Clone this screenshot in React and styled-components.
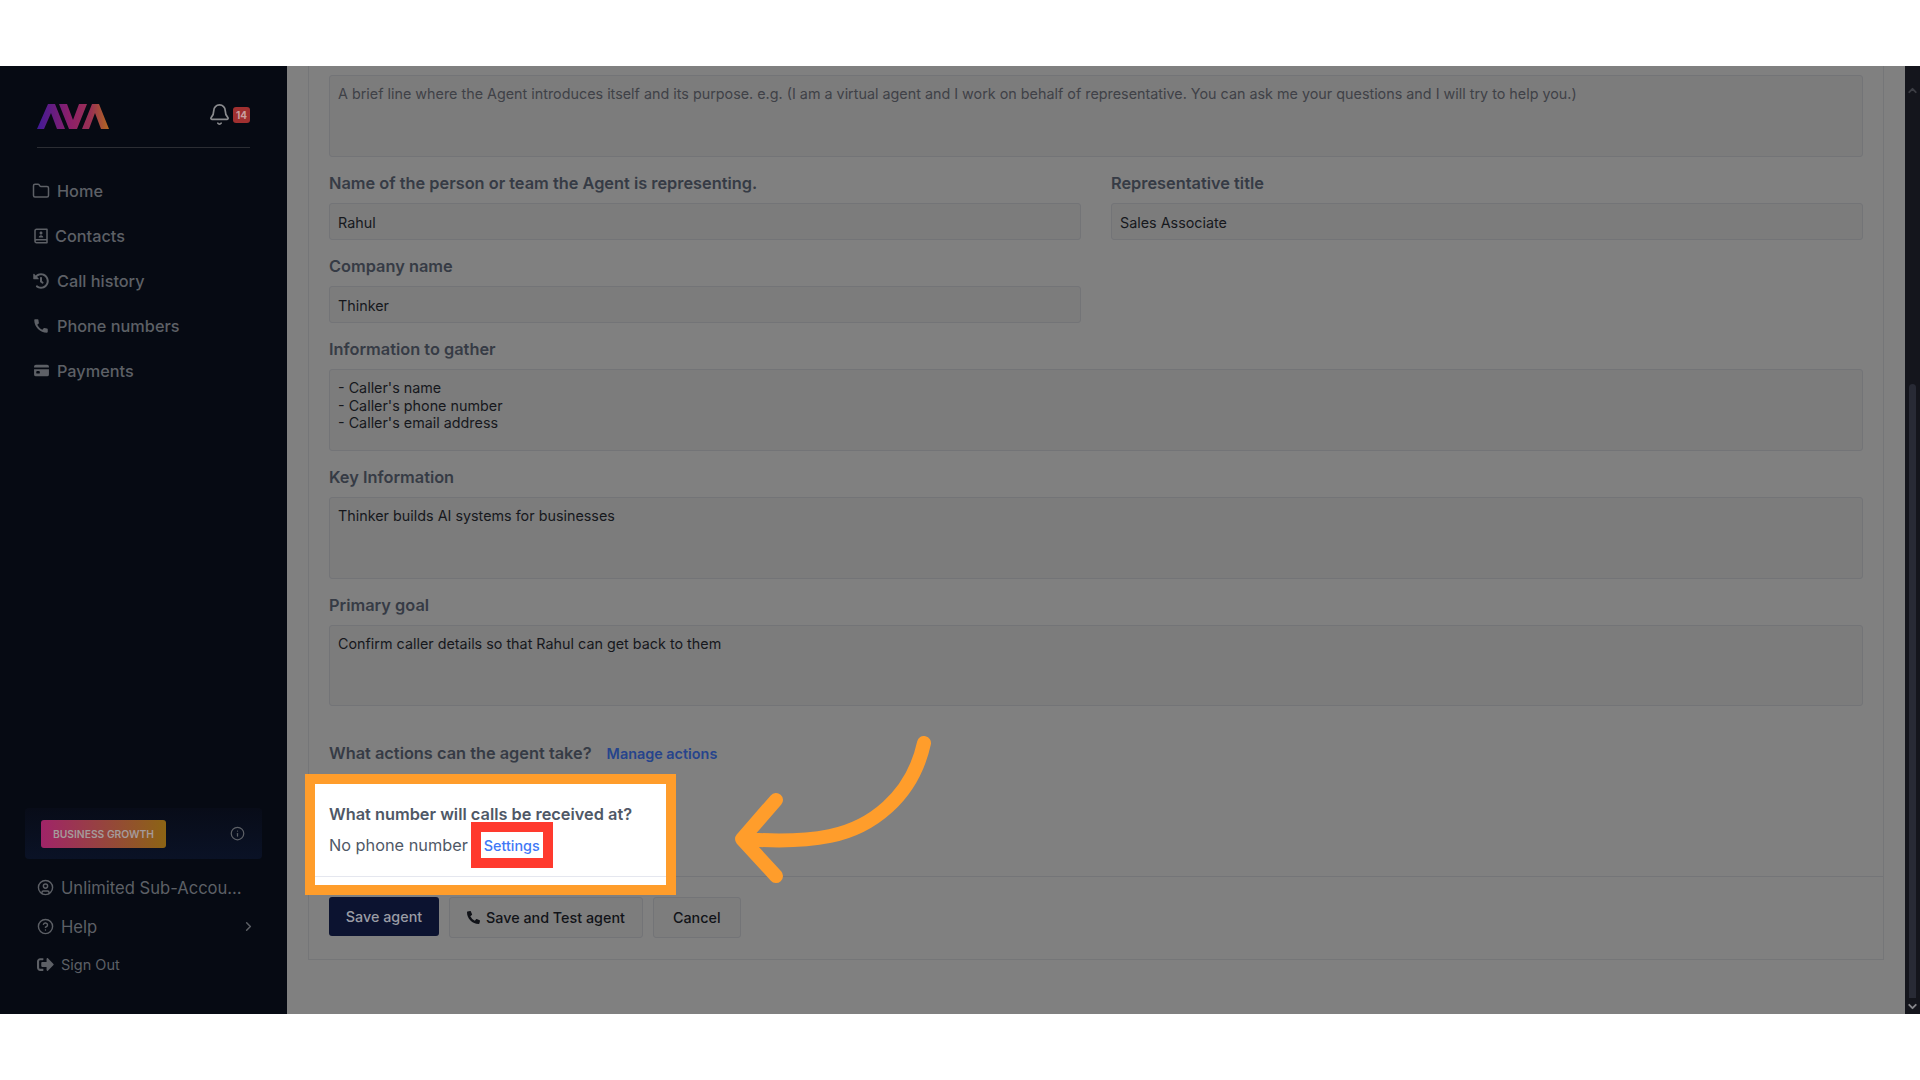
import styled, { createGlobalStyle } from 'styled-components'
import { Bell, ChevronDown, ChevronRight, ChevronUp, CircleHelp, CircleUser, Folder, Info } from 'lucide-react'
import { FaHistory, FaPhoneAlt, FaSignOutAlt } from 'react-icons/fa'
import { IoCard } from 'react-icons/io5'
import { MdCall } from 'react-icons/md'
import { RiContactsBook2Line } from 'react-icons/ri'

const navItems = [
  { label: 'Home', icon: <Folder size={18} /> },
  { label: 'Contacts', icon: <RiContactsBook2Line size={18} style={{ marginRight: -2 }} /> },
  { label: 'Call history', icon: <FaHistory size={16} style={{ marginLeft: 1, marginRight: 1 }} /> },
  { label: 'Phone numbers', icon: <MdCall size={18} /> },
  { label: 'Payments', icon: <IoCard size={17} style={{ marginLeft: 1 }} /> },
]

const Logo = () => (
  <svg width="72" height="27" viewBox="0 0 72 27">
    <defs>
      <linearGradient id="ava" x1="0" y1="0" x2="1" y2="0">
        <stop offset="0" stopColor="#401a96" />
        <stop offset="0.45" stopColor="#8c1f6a" />
        <stop offset="0.75" stopColor="#9a3152" />
        <stop offset="1" stopColor="#b0691f" />
      </linearGradient>
    </defs>
    <path
      fill="url(#ava)"
      d="M0 26 L11 1 H18 L28 26 H20 L14 10 L7 26 Z M22 1 H30 L36 17 L42 1 H50 L40 26 H32 Z M45 26 L55 1 H62 L72 26 H64 L58 10 L52 26 Z"
    />
  </svg>
)

const App = () => {
  return (
    <>
      <GlobalStyle />
      <Frame>
        <Sidebar>
          <Brand>
            <Logo />
            <Alerts>
              <Bell size={23} strokeWidth={1.8} />
              <AlertCount>14</AlertCount>
            </Alerts>
          </Brand>
          <Nav>
            {navItems.map((item) => (
              <NavItem key={item.label}>
                {item.icon}
                {item.label}
              </NavItem>
            ))}
          </Nav>
          <SideFooter>
            <PlanCard>
              <PlanBadge>BUSINESS GROWTH</PlanBadge>
              <Info size={15} />
            </PlanCard>
            <FooterLink $height={39}>
              <CircleUser size={17} />
              Unlimited Sub-Accou…
            </FooterLink>
            <FooterLink $height={39}>
              <CircleHelp size={17} />
              Help
              <ChevronRight size={15} strokeWidth={2.4} />
            </FooterLink>
            <FooterLink $height={37} $small>
              <FaSignOutAlt size={17} />
              Sign Out
            </FooterLink>
          </SideFooter>
        </Sidebar>

        <Main>
          <Card>
            <TextArea $height={82} $muted>
              A brief line where the Agent introduces itself and its purpose. e.g. (I am a virtual agent and I work on
              behalf of representative. You can ask me your questions and I will try to help you.)
            </TextArea>
            <TwoColumns>
              <Field>
                <Label>Name of the person or team the Agent is representing.</Label>
                <Input>Rahul</Input>
              </Field>
              <Field>
                <Label>Representative title</Label>
                <Input>Sales Associate</Input>
              </Field>
            </TwoColumns>
            <TwoColumns>
              <Field>
                <Label>Company name</Label>
                <Input>Thinker</Input>
              </Field>
            </TwoColumns>
            <Field>
              <Label>Information to gather</Label>
              <TextArea $height={82}>
                {"- Caller's name\n- Caller's phone number\n- Caller's email address"}
              </TextArea>
            </Field>
            <Field>
              <Label>Key Information</Label>
              <TextArea $height={82}>Thinker builds AI systems for businesses</TextArea>
            </Field>
            <Field>
              <Label>Primary goal</Label>
              <TextArea $height={81}>Confirm caller details so that Rahul can get back to them</TextArea>
            </Field>
            <ActionsRow>
              <Label>What actions can the agent take?</Label>
              <ManageLink>Manage actions</ManageLink>
            </ActionsRow>
            <Spotlight>
              <SpotlightTitle>What number will calls be received at?</SpotlightTitle>
              <PhoneRow>
                No phone number
                <SettingsLink>Settings</SettingsLink>
              </PhoneRow>
              <SpotlightRule />
            </Spotlight>
            <CardFooter>
              <PrimaryButton>Save agent</PrimaryButton>
              <OutlineButton $padding={17}>
                <FaPhoneAlt size={13} />
                Save and Test agent
              </OutlineButton>
              <OutlineButton $padding={19}>Cancel</OutlineButton>
            </CardFooter>
          </Card>
        </Main>

        <ScrollBar>
          <ChevronUp size={13} strokeWidth={3.5} color="#3c3d44" />
          <ScrollThumb />
          <ChevronDown size={13} strokeWidth={3.5} color="#85858a" />
        </ScrollBar>

        <Arrow viewBox="0 0 210 150" fill="none">
          <path
            d="M194 7 C182 62 140 92 100 100 C70 106 40 105 14 103 M46 64 L12 103 L46 140"
            stroke="#ff9d2b"
            strokeWidth="14"
            strokeLinecap="round"
            strokeLinejoin="round"
          />
        </Arrow>
      </Frame>
    </>
  )
}

export default App

const GlobalStyle = createGlobalStyle`
  body {
    margin: 0;
    background: #ffffff;
    font-family: Inter, "Liberation Sans", sans-serif;
  }
`
const Frame = styled.div`
  width: 1920px;
  height: 948px;
  margin: 66px 0;

  position: relative;
  overflow: hidden;

  display: flex;
  background-color: #808080;
`
/**
 * @description left navigation
 */
const Sidebar = styled.aside`
  width: 287px;
  flex-shrink: 0;

  display: flex;
  flex-direction: column;

  background-color: #060a13;
  color: #5d6066;
`
const Brand = styled.div`
  height: 82px;
  margin: 0 37px;
  box-sizing: border-box;
  padding-top: 37px;

  display: flex;
  align-items: flex-start;
  justify-content: space-between;

  border-bottom: 1px solid #2b2d33;
`
const Alerts = styled.div`
  display: flex;
  align-items: center;
  gap: 2px;
  color: #8a8b8e;
`
const AlertCount = styled.span`
  width: 17px;
  height: 16px;

  display: flex;
  align-items: center;
  justify-content: center;

  border-radius: 3px;
  background-color: #a03030;
  color: #c9a0a0;
  font-size: 10px;
  font-weight: 700;
`
const Nav = styled.nav`
  margin-top: 20px;
  padding-left: 32px;
`
const NavItem = styled.div`
  height: 45px;

  display: flex;
  align-items: center;
  gap: 7px;

  font-size: 16.3px;
  font-weight: 500;
`
const SideFooter = styled.div`
  margin-top: auto;
  padding: 0 25px 31px;
`
const PlanCard = styled.div`
  height: 51px;
  box-sizing: border-box;
  margin-bottom: 9px;
  padding: 0 17px 0 16px;

  display: flex;
  align-items: center;
  justify-content: space-between;

  border-radius: 4px;
  background: linear-gradient(180deg, #080c18, #0a1226);
`
const PlanBadge = styled.span`
  width: 125px;
  height: 28px;

  display: flex;
  align-items: center;
  justify-content: center;

  border-radius: 3px;
  background: linear-gradient(90deg, #a02468, #8c6414);
  color: #a59a9a;
  font-size: 10.3px;
  font-weight: 600;
`
const FooterLink = styled.div`
  height: ${(props) => props.$height}px;
  padding: 0 6px 0 12px;

  display: flex;
  align-items: center;
  gap: 7px;

  font-size: ${(props) => (props.$small ? '14.5px' : '16.6px')};

  svg:last-child:not(:first-child) {
    margin-left: auto;
  }
`
const Main = styled.main`
  flex: 1;
  min-width: 0;
  padding: 0 21px;
`
/**
 * @description the form, already scrolled so its top edge is out of view
 */
const Card = styled.div`
  height: 894px;
  box-sizing: border-box;
  padding: 9px 20px 0;

  display: flex;
  flex-direction: column;
  gap: 14px;

  border: 1px solid #757678;
  border-top: none;
  color: #16181d;
  font-size: 14.35px;
`
const TwoColumns = styled.div`
  display: grid;
  grid-template-columns: repeat(2, 1fr);
  gap: 30px;
`
const Field = styled.div`
  display: flex;
  flex-direction: column;
  gap: 8px;
`
const Label = styled.div`
  line-height: 24px;
  color: #363b45;
  font-size: 16.35px;
  font-weight: 600;
`
const Input = styled.div`
  height: 37px;
  box-sizing: border-box;
  padding: 1px 8px 0;

  display: flex;
  align-items: center;

  border: 1px solid #737477;
  border-radius: 3px;
  background-color: #7c7c7c;
`
const TextArea = styled.div`
  height: ${(props) => props.$height}px;
  box-sizing: border-box;
  padding: 9px 8px 8px;

  border: 1px solid #737477;
  border-radius: 3px;
  background-color: #7c7c7c;
  color: ${(props) => (props.$muted ? '#3f4147' : 'inherit')};
  line-height: 17.5px;
  white-space: pre-line;
`
const ActionsRow = styled.div`
  margin-top: 21px;

  display: flex;
  align-items: center;
  gap: 15px;
`
const ManageLink = styled.span`
  color: #26448c;
  font-size: 14.4px;
  font-weight: 600;
`
/**
 * @description the bright framed part of the form
 */
const Spotlight = styled.section`
  width: 371px;
  height: 121px;
  box-sizing: border-box;
  margin: -5px 0 0 -24px;
  padding: 18px 0 0 14px;

  position: relative;
  z-index: 1;

  border: 10px solid #ff9d2b;
  background-color: #ffffff;
`
const SpotlightTitle = styled.div`
  line-height: 24px;
  color: #4f5866;
  font-size: 16.35px;
  font-weight: 600;
`
const PhoneRow = styled.div`
  height: 28px;
  margin-top: 5px;

  display: flex;
  align-items: center;
  gap: 3px;

  color: #4f5866;
  font-size: 16.3px;
`
const SettingsLink = styled.span`
  margin: -9px 0;
  padding: 0 3px;
  height: 26px;

  display: flex;
  align-items: center;

  border: 10px solid #ff3a2e;
  background-color: #ffffff;
  color: #3f78f6;
  font-size: 14.35px;
  font-weight: 500;
`
const SpotlightRule = styled.div`
  margin: 17px 0 0 -14px;
  border-top: 1px solid #e5e7ef;
`
const CardFooter = styled.div`
  margin: -33px -20px 0;
  padding: 20px 20px 0;

  display: flex;
  align-items: flex-start;
  gap: 10px;

  border-top: 1px solid #747578;
`
const PrimaryButton = styled.button`
  width: 110px;
  height: 39px;

  border: none;
  border-radius: 3px;
  background-color: #0c1330;
  color: #9a9ca5;
  font: 500 14.35px Inter, "Liberation Sans", sans-serif;
`
const OutlineButton = styled.button`
  height: 41px;
  padding: 0 ${(props) => props.$padding}px;

  display: flex;
  align-items: center;
  gap: 6px;

  border: 1px solid #737477;
  border-radius: 3px;
  background-color: #7d7d7d;
  color: #111318;
  font: 500 14.35px Inter, "Liberation Sans", sans-serif;
`
const ScrollBar = styled.div`
  width: 15px;
  flex-shrink: 0;
  padding: 18px 0 1px;

  display: flex;
  flex-direction: column;
  align-items: center;

  background-color: #14151c;
`
const ScrollThumb = styled.div`
  width: 7px;
  height: 614px;
  margin-top: auto;
  margin-bottom: 2px;

  border-radius: 4px 4px 0 0;
  background-color: #282a35;
`
const Arrow = styled.svg`
  width: 210px;
  height: 150px;

  position: absolute;
  left: 730px;
  top: 670px;
`
